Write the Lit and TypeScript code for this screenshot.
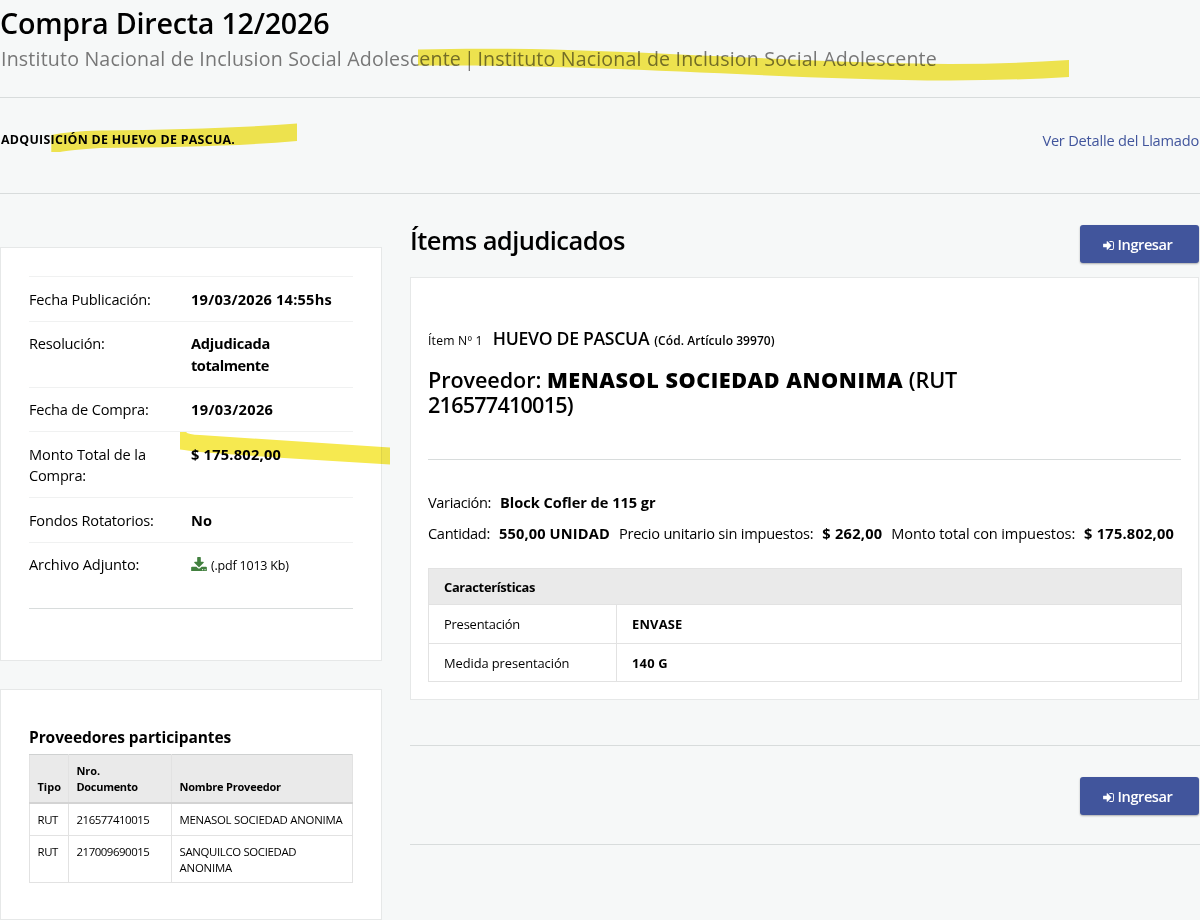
import { LitElement, html, svg, css, unsafeCSS } from "lit";
import { customElement } from "lit/decorators.js";

// Tracking utilities: .k-N tightens by N/100 px, .kN loosens by N/100 px.
const trackingRules = Array.from({ length: 181 }, (_, i) => i - 105)
  .map((n) => `.k${n}{letter-spacing:${n / 100}px}`)
  .join("");

const t = (text: string, k = 0, cls = "") => html`<span class="t k${k} ${cls}">${text}</span>`;

interface Detail {
  label: unknown;
  value: unknown;
}

const downloadIcon = html`<svg class="download" viewBox="0 0 1664 1536" aria-hidden="true">
  <path fill="#42803f" d="M1280 1344a64 64 0 1 0-128 0a64 64 0 1 0 128 0zm256 0a64 64 0 1 0-128 0a64 64 0 1 0 128 0zm128-224v320q0 40-28 68t-68 28H96q-40 0-68-28t-28-68v-320q0-40 28-68t68-28h465l135 136q58 56 136 56t136-56l136-136h464q40 0 68 28t28 68zm-325-569q17 41-14 70l-448 448q-18 19-45 19t-45-19L339 621q-31-29-14-70 17-39 59-39h256V64q0-26 19-45t45-19h256q26 0 45 19t19 45v448h256q42 0 59 39z"/>
</svg>`;

const signInIcon = html`<svg class="sign-in" viewBox="0 0 1536 1280" aria-hidden="true">
  <path fill="#fff" d="M1184 640q0 26-19 45l-544 544q-19 19-45 19t-45-19-19-45V896H64q-26 0-45-19T0 832V448q0-26 19-45t45-19h448V96q0-26 19-45t45-19 45 19l544 544q19 19 19 45zm352-352v704q0 119-84.500 203.500T1248 1280H928q-13 0-22.500-9.500T896 1248q0-4-1-20t-.5-26.500 3-23.500 10-19.500T928 1152h320q66 0 113-47t47-113V288q0-66-47-113t-113-47H936l-11.500-1-11.500-3-8-5.500-7-9-2-13.500q0-4-1-20t-.5-26.500 3-23.500 10-19.500T928 0h320q119 0 203.500 84.500T1536 288z"/>
</svg>`;

const details: Detail[] = [
  { label: t("Fecha Publicación:", -18), value: t("19/03/2026 14:55hs", 22) },
  { label: t("Resolución:", -20), value: html`${t("Adjudicada", -23)}<br />${t("totalmente", -46)}` },
  { label: t("Fecha de Compra:", -20), value: t("19/03/2026", 35) },
  { label: html`${t("Monto Total de la", -12)}<br />${t("Compra:", -20)}`, value: t("$ 175.802,00", 24) },
  { label: t("Fondos Rotatorios:", -18), value: t("No", 5) },
  { label: t("Archivo Adjunto:", -12), value: html`${downloadIcon}${t("(.pdf 1013 Kb)", -20, "file")}` },
];

@customElement("primary-button")
export class PrimaryButton extends LitElement {
  static styles = css`
    :host { display: block; }
    .btn {
      display: flex; align-items: center; justify-content: center; box-sizing: border-box;
      width: 119px; height: 38px; padding: 0 4px 0 0; border: 0; border-radius: 3px;
      background: #41559c; color: #fff; box-shadow: 0 1px 2px rgba(0, 0, 0, 0.3);
      font: 600 14.6px/20px "Open Sans", sans-serif; letter-spacing: -0.45px;
    }
    .sign-in { width: 11px; height: 9px; margin: 2px 4px 0 0; }
  `;
  render() {
    return html`<button class="btn">${signInIcon}<span>Ingresar</span></button>`;
  }
}

@customElement("app-root")
export class AppRoot extends LitElement {
  static styles = [
    unsafeCSS(trackingRules),
    css`
      :host {
        display: block; position: relative; box-sizing: border-box; width: 1200px; height: 920px; overflow: hidden;
        background: #f6f8f8; color: #000; font: 400 14.6px/21.5px "Open Sans", sans-serif;
      }
      h1, h2, h3, h4, p { margin: 0; font-weight: 600; }
      .t { white-space: nowrap; }
      .head { box-sizing: border-box; height: 98px; border-bottom: 1px solid #d8dcdc; }
      h1 { font-size: 28.7px; line-height: 36px; padding: 5px 0 0 0; }
      .org { font-size: 19.6px; line-height: 28px; padding: 4px 0 0 1px; color: #777; font-weight: 400; white-space: pre; }
      .sep { white-space: pre; word-spacing: -2px; }
      .subject {
        box-sizing: border-box; height: 96px; border-bottom: 1px solid #d8dcdc;
        display: flex; justify-content: space-between; padding: 30px 1px 0 1px;
      }
      .subject strong { font-size: 12.4px; line-height: 23px; }
      .subject a { color: #41559c; line-height: 24px; }
      .cols { display: grid; grid-template-columns: 382px 790px; column-gap: 28px; align-items: start; }
      .side { padding-top: 53px; display: flex; flex-direction: column; gap: 28px; }
      .card { background: #fff; border: 1px solid #e6e8e8; box-sizing: border-box; }
      .side .card { width: 382px; padding: 28px; }
      .summary { height: 414px; }
      .row {
        display: grid; grid-template-columns: 162px 162px; grid-auto-rows: minmax(21.5px, auto);
        border-top: 1px solid #f0f1f1; padding: 11.5px 0 10.5px;
      }
      .row .v { font-weight: 700; }
      .last { border-bottom: 1px solid #d8dcdc; height: 21.5px; padding-bottom: 32.5px; }
      .download { width: 16px; height: 14.5px; vertical-align: -1px; margin-right: 4px; }
      .file { font-size: 12.5px; font-weight: 400; line-height: 1; }
      .bidders { height: 231px; }
      .side .bidders { padding-top: 36px; }
      h3 { font-size: 15.5px; line-height: 22px; font-weight: 700; margin-bottom: 6px; }
      table { border-collapse: collapse; table-layout: fixed; }
      .bt { width: 324px; font-size: 11.4px; line-height: 16px; }
      .bt th, .bt td { border: 1px solid #e2e2e2; padding: 8px 7.500px 7px; text-align: left; vertical-align: top; }
      .bt td { padding-bottom: 6.500px; }
      .bt th { background: #eaeaea; font-size: 11px; vertical-align: bottom; border-bottom: 2px solid #d3d3d3; border-top-color: #cfd1d1; }
      .c1 { width: 39px; } .c2 { width: 103px; } .c3 { width: 181px; }
      .main { padding-top: 31px; }
      .bar { display: flex; justify-content: space-between; height: 52px; padding-right: 1px; }
      h2 { font-size: 25.5px; line-height: 30px; }
      .main .card { width: 789px; height: 423px; padding: 47px 17px 0 17px; }
      .main .bar { margin-top: 0; }
      .item { display: flex; align-items: baseline; font-size: 17.6px; line-height: 26px; font-weight: 600; }
      .num { font-size: 12.2px; font-weight: 400; margin-right: 10px; }
      .code { font-size: 12px; font-weight: 600; margin-left: 5px; }
      h4 { font-size: 21.6px; line-height: 24.5px; margin-top: 14px; padding-bottom: 42px; border-bottom: 1px solid #d8dcdc; }
      h4 strong { font-weight: 800; }
      .line { display: flex; line-height: 22px; }
      .variation { margin-top: 31px; }
      .amounts { margin-top: 9px; }
      .line strong { margin: 0 9px; }
      .ft { width: 753px; margin-top: 24px; font-size: 12.9px; line-height: 20px; }
      .ft th, .ft td { border: 1px solid #e2e2e2; padding: 9px 15px 8.500px; text-align: left; }
      .ft th { background: #eaeaea; padding: 8px 15px 7px; }
      .f1 { width: 188px; } .f2 { width: 565px; }
      .foot {
        box-sizing: border-box; height: 100px; margin-top: 45px; padding: 31px 1px 0 0;
        border: solid #d8dcdc; border-width: 1px 0; display: flex; justify-content: flex-end; align-items: flex-start;
      }
      .marker { position: absolute; inset: 0; width: 1200px; height: 920px; mix-blend-mode: multiply; pointer-events: none; }
    `,
  ];

  render() {
    return html`
      <header class="head">
        <h1>${t("Compra Directa 12/2026", -24)}</h1>
        <p class="org">${t("Instituto Nacional de Inclusion Social Adolescente", 18)}${t(" | ", -20, "sep")}${t("Instituto Nacional de Inclusion Social Adolescente", 17)}</p>
      </header>
      <section class="subject">
        <strong>${t("ADQUISICIÓN DE HUEVO DE PASCUA.", 29)}</strong>
        <a>${t("Ver Detalle del Llamado", -21)}</a>
      </section>
      <div class="cols">
        <aside class="side">
          <section class="card summary">
            ${details.map((d, i) => html`<div class="row ${i === details.length - 1 ? "last" : ""}">
              <div>${d.label}</div><div class="v">${d.value}</div>
            </div>`)}
          </section>
          <section class="card bidders">
            <h3>${t("Proveedores participantes", -8)}</h3>
            <table class="bt">
              <colgroup><col class="c1" /><col class="c2" /><col class="c3" /></colgroup>
              <thead><tr>
                <th>${t("Tipo", 0)}</th>
                <th>${t("Nro.", -10)}<br />${t("Documento", -30)}</th>
                <th>${t("Nombre Proveedor", -20)}</th>
              </tr></thead>
              <tbody>
                <tr><td>${t("RUT", -40)}</td><td>${t("216577410015", -44)}</td><td>${t("MENASOL SOCIEDAD ANONIMA", -24)}</td></tr>
                <tr><td>${t("RUT", -40)}</td><td>${t("217009690015", -44)}</td><td>${t("SANQUILCO SOCIEDAD", -34)}<br />${t("ANONIMA", -20)}</td></tr>
              </tbody>
            </table>
          </section>
        </aside>
        <main class="main">
          <div class="bar"><h2>${t("Ítems adjudicados", -55)}</h2><primary-button></primary-button></div>
          <section class="card">
            <div class="item">
              ${t("Ítem Nº 1", 20, "num")}${t("HUEVO DE PASCUA", -28)}${t("(Cód. Artículo 39970)", 5, "code")}
            </div>
            <h4>${t("Proveedor:", -8)} <strong>${t("MENASOL SOCIEDAD ANONIMA", 54)}</strong> ${t("(RUT", -10)}<br />${t("216577410015)", -78)}</h4>
            <div class="line variation">${t("Variación:", -38)}<strong>${t("Block Cofler de 115 gr", -4)}</strong></div>
            <div class="line amounts">
              ${t("Cantidad:", -33)}<strong>${t("550,00 UNIDAD", 14)}</strong>
              ${t("Precio unitario sin impuestos:", -24)}<strong>${t("$ 262,00", 24)}</strong>
              ${t("Monto total con impuestos:", -12)}<strong>${t("$ 175.802,00", 24)}</strong>
            </div>
            <table class="ft">
              <colgroup><col class="f1" /><col class="f2" /></colgroup>
              <tr><th colspan="2">${t("Características", -33)}</th></tr>
              <tr><td>${t("Presentación", -20)}</td><td><strong>${t("ENVASE", 20)}</strong></td></tr>
              <tr><td>${t("Medida presentación", -8)}</td><td><strong>${t("140 G", 20)}</strong></td></tr>
            </table>
          </section>
          <div class="foot"><primary-button></primary-button></div>
        </main>
      </div>
      <svg class="marker" viewBox="0 0 1200 920" aria-hidden="true">
        ${[
          "M418 49.500C520 47 600 51 680 54.500S860 63.500 950 64Q1010 64 1069 60V77Q1010 80.500 950 80.500C860 80 760 75 680 71.500S520 65 418 65.500Z",
          "M51.300 135Q70 131 100 130.500C180 129.500 240 128 297 123.500V141C240 146 180 147 100 148Q70 150 60 152H51.300Z",
          "M180 432H186Q188 434.500 200 435L390 447.500V464.500L300 459Q240 455 200 452Q188 450.500 180 449.500Z",
        ].map((d) => svg`<path fill="#f6e950" d=${d} />`)}
      </svg>
    `;
  }
}
